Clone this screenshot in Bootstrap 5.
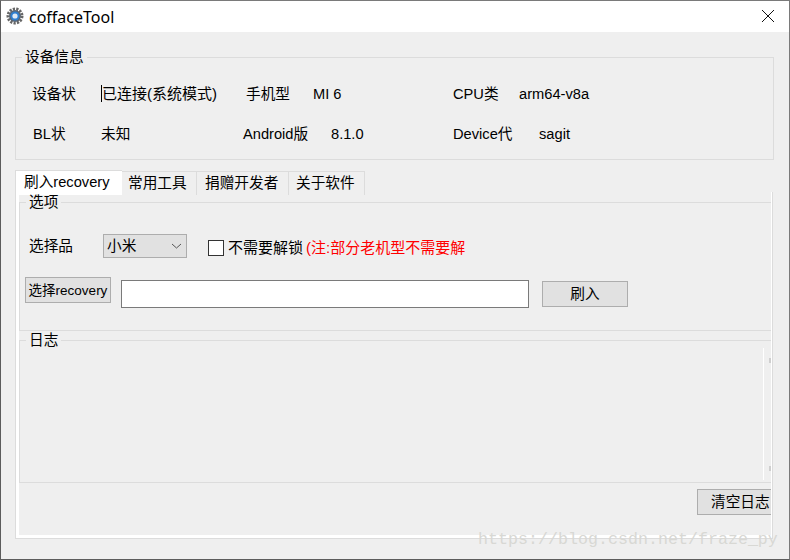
<!DOCTYPE html>
<html>

<head>
    <title>cofface Tool</title>
    <link rel="stylesheet" href="https://cdn.jsdelivr.net/npm/bootstrap@5.3.0/dist/css/bootstrap.min.css">
    <style>
        html, body {
            height: 100%;
            overflow: hidden;
        }

        body {
            background: #efefef;
            color: #000;
            font-family: "Liberation Sans", "Noto Sans CJK SC", sans-serif;
            font-size: 14.67px;
            line-height: 20px;
        }

        .tool-window {
            position: relative;
            height: 560px;
            border: 1px solid #5c5c5c;
            border-right-color: #7a7a7a;
            border-top-color: #7a7a7a;
            overflow: hidden;
        }

        .title-bar {
            height: 31px;
            background: #fff;
            padding: 0 14px 0 5px;
            font-family: "Noto Sans", sans-serif;
            font-size: 16px;
            gap: 5px;
        }

        .title-icon {
            margin-bottom: 2px;
        }

        .content-area {
            padding: 15px 15px 0 14px;
        }

        .group-box {
            border: 1px solid #dcdcdc;
            padding: 0;
        }

        .group-box legend {
            float: none;
            width: auto;
            font-size: 14.67px;
            line-height: 20px;
            margin: 0 0 0 6px;
            padding: 0 3px;
        }

        .info-group {
            height: 113px;
        }

        .info-row {
            display: grid;
            height: 40px;
            align-items: center;
        }

        .info-row-one {
            grid-template-columns: 69px 145px 67px 140px 66px 1fr;
            padding-left: 16px;
            margin-top: 7px;
        }

        .info-row-two {
            grid-template-columns: 68px 142px 88px 122px 86px 1fr;
            padding-left: 17px;
        }

        .text-caret {
            border-left: 1px solid #000;
            font-size: 15px;
            line-height: 18px;
        }

        .flash-tabs {
            margin-top: 10px;
            height: 25px;
            align-items: flex-end;
        }

        .flash-tabs .nav-link {
            height: 24px;
            padding: 1px 0 0 6px;
            color: #000;
            background: #efefef;
            border: 1px solid #dcdcdc;
            border-bottom: 0;
            border-left: 0;
            line-height: 20px;
        }

        .flash-tabs .nav-link.active {
            height: 25px;
            background: #fff;
            border-left: 1px solid #dcdcdc;
            border-right: 0;
            padding-left: 8px;
            width: 107px;
        }

        .tab-tools { width: 75px; }
        .flash-tabs .tab-donate { width: 92px; padding-left: 8px; }
        .flash-tabs .tab-about { width: 76px; padding-left: 7px; }

        .tab-body {
            width: 758px;
            height: 347px;
            border: 1px solid #dcdcdc;
            border-top: 0;
        }

        .tab-inner {
            height: 100%;
            border: 0 solid #fff;
            border-width: 0 1px 3px 3px;
            overflow-x: clip;
        }

        .option-group {
            height: 139px;
            width: 770px;
            margin-top: -3px;
        }

        .option-row {
            height: 42px;
            margin-top: 13px;
            padding-left: 9px;
        }

        .brand-label {
            width: 74px;
        }

        .brand-select {
            width: 84px;
            height: 24px;
            background: #e1e1e1;
            border: 1px solid #adadad;
            padding-left: 3px;
        }

        .no-unlock {
            margin-left: 21px;
            margin-top: 4px;
            gap: 4px;
            font-size: 15px;
        }

        .unlock-box {
            width: 16px;
            height: 16px;
            background: #fff;
            border: 1px solid #333;
        }

        .unlock-note {
            color: #f00;
            margin-left: -1px;
            white-space: nowrap;
        }

        .flash-row {
            margin-top: 13px;
            padding-left: 5px;
        }

        .flash-btn {
            background: #e1e1e1;
            border: 1px solid #adadad;
            border-radius: 0;
            color: #000;
            padding: 0;
            line-height: 20px;
        }

        .pick-btn {
            width: 86px;
            height: 26px;
            font-size: 13.5px;
            margin-top: -3px;
            padding-top: 1px;
        }

        .path-input {
            width: 408px;
            height: 28px;
            margin-left: 10px;
            background: #fff;
            border: 1px solid #7a7a7a;
        }

        .go-btn {
            width: 86px;
            height: 26px;
            margin-left: 13px;
        }

        .log-group {
            height: 153px;
            width: 770px;
            margin-top: -1px;
        }

        .log-area {
            height: 133px;
            position: relative;
        }

        .log-rail {
            position: absolute;
            left: 743px;
            top: -2px;
            bottom: 3px;
            width: 1px;
            background: #fff;
        }

        .rail-mark {
            position: absolute;
            left: 749px;
            width: 2px;
            height: 5px;
            background: #cfcfcf;
        }

        .rail-up { top: 8px; }
        .rail-down { top: 116px; }

        .clear-row {
            margin-top: 6px;
        }

        .clear-btn {
            width: 74px;
            height: 26px;
            border-right: 0;
            text-align: left;
            padding-left: 13px;
        }

        .watermark {
            position: absolute;
            left: 477px;
            top: 528px;
            font-family: "Liberation Mono", monospace;
            font-size: 16.67px;
            line-height: 22px;
            color: #d8d8d4;
            white-space: nowrap;
        }
    </style>
</head>

<body>
    <div class="tool-window">
        <div class="title-bar d-flex align-items-center">
            <svg class="title-icon" width="18" height="18" viewBox="0 0 18 18">
                <circle cx="9" cy="9" r="7" fill="none" stroke="#666" stroke-width="3" stroke-dasharray="2.2 1.2"/>
                <circle cx="9" cy="9" r="6" fill="#5a6470"/>
                <circle cx="9" cy="9" r="4.6" fill="#2f7fd0"/>
                <circle cx="9" cy="9" r="2.6" fill="#dfeaf5"/>
            </svg>
            <span class="flex-grow-1">coffaceTool</span>
            <svg class="title-icon" width="14" height="14" viewBox="0 0 14 14">
                <path d="M1 1 13 13M13 1 1 13" stroke="#111" stroke-width="1" fill="none"/>
            </svg>
        </div>

        <div class="content-area">
            <fieldset class="group-box info-group">
                <legend>设备信息</legend>
                <div class="info-row info-row-one">
                    <span>设备状</span>
                    <span><span class="text-caret">已连接(系统模式)</span></span>
                    <span>手机型</span>
                    <span>MI 6</span>
                    <span>CPU类</span>
                    <span>arm64-v8a</span>
                </div>
                <div class="info-row info-row-two">
                    <span>BL状</span>
                    <span>未知</span>
                    <span>Android版</span>
                    <span>8.1.0</span>
                    <span>Device代</span>
                    <span>sagit</span>
                </div>
            </fieldset>

            <ul class="nav flash-tabs">
                <li class="nav-item"><a class="nav-link rounded-0 active" href="#">刷入recovery</a></li>
                <li class="nav-item"><a class="nav-link rounded-0 tab-tools" href="#">常用工具</a></li>
                <li class="nav-item"><a class="nav-link rounded-0 tab-donate" href="#">捐赠开发者</a></li>
                <li class="nav-item"><a class="nav-link rounded-0 tab-about" href="#">关于软件</a></li>
            </ul>

            <div class="tab-body">
                <div class="tab-inner">
                    <fieldset class="group-box option-group">
                        <legend>选项</legend>
                        <div class="option-row d-flex align-items-center">
                            <span class="brand-label">选择品</span>
                            <div class="brand-select d-flex align-items-center justify-content-between">
                                <span>小米</span>
                                <svg class="me-1" width="11" height="6" viewBox="0 0 11 6">
                                    <path d="M1 1 5.5 5 10 1" fill="none" stroke="#555"/>
                                </svg>
                            </div>
                            <div class="no-unlock d-flex align-items-center">
                                <span class="unlock-box"></span>
                                <span>不需要解锁</span>
                                <span class="unlock-note">(注:部分老机型不需要解</span>
                            </div>
                        </div>
                        <div class="flash-row d-flex align-items-center">
                            <button class="flash-btn pick-btn align-self-start">选择recovery</button>
                            <div class="path-input"></div>
                            <button class="flash-btn go-btn">刷入</button>
                        </div>
                    </fieldset>

                    <fieldset class="group-box log-group">
                        <legend>日志</legend>
                        <div class="log-area">
                            <div class="log-rail"></div>
                            <div class="rail-mark rail-up"></div>
                            <div class="rail-mark rail-down"></div>
                        </div>
                    </fieldset>

                    <div class="clear-row d-flex justify-content-end">
                        <button class="flash-btn clear-btn">清空日志</button>
                    </div>
                </div>
            </div>
        </div>

        <div class="watermark">https://blog.csdn.net/fraze_py</div>
    </div>
</body>

</html>
